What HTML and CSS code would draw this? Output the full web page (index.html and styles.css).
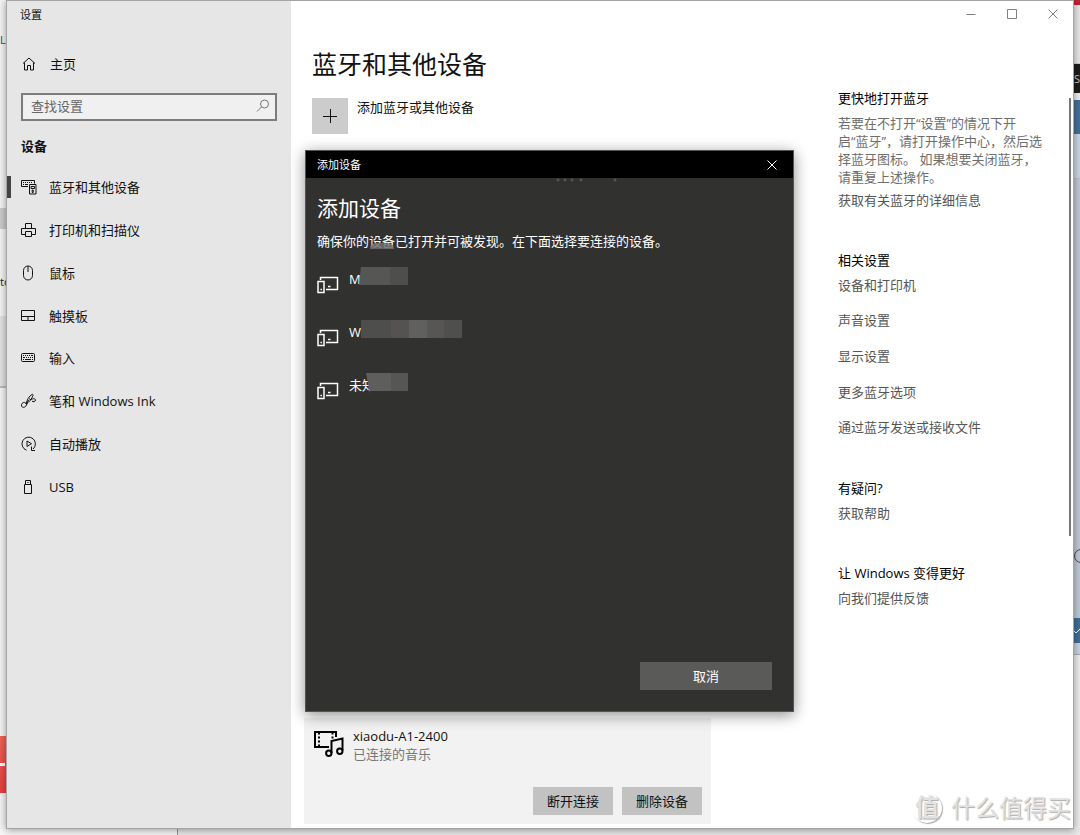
FILE: index.html
```html
<!DOCTYPE html>
<html lang="zh-CN">
<head>
<meta charset="utf-8">
<title>设置</title>
<link rel="stylesheet" href="styles.css">
</head>
<body>
<div class="desktop">
  <div class="edge edge-left" aria-hidden="true">
    <span class="edge-text">La</span>
    <span class="edge-tab"></span>
    <span class="edge-text edge-text-low">to</span>
    <span class="edge-panel"></span>
    <span class="edge-red"><i class="edge-dash"></i></span>
  </div>

  <div class="window">
    <aside class="sidebar">
      <div class="app-title">设置</div>
      <a class="home" href="#">
        <svg class="icon" viewBox="0 0 16 16"><path d="M2 7.500 8 2l6 5.500M3.500 6.500V14H6.500V9.500h3V14h3V6.500"/></svg>
        <span>主页</span>
      </a>
      <label class="search">
        <input type="text" placeholder="查找设置" aria-label="查找设置">
        <svg class="icon icon-search" viewBox="0 0 16 16"><circle cx="9.500" cy="6" r="4"/><path d="M6.500 9 2 13.500"/></svg>
      </label>
      <h2 class="side-heading">设备</h2>
      <nav class="nav">
        <a class="nav-item active" href="#">
          <svg class="icon" viewBox="0 0 16 16"><path d="M7 7.500H.500v-6h13v3M2 3.500h1m1 0h1m1 0h1m1 0h1m1 0h1M2 5.500h1m1 0h3M8.500 5.500h6.500v9.500H8.500zM10 7.500h3.500v2H10zM11.200 11h1v2.500h-1z"/></svg>
          <span>蓝牙和其他设备</span></a>
        <a class="nav-item" href="#">
          <svg class="icon" viewBox="0 0 16 16"><path d="M4.500 6V1.500h6V6M4 12.500H.500v-6h14v6H11M4.500 9.500h6v5h-6z"/></svg>
          <span>打印机和扫描仪</span></a>
        <a class="nav-item" href="#">
          <svg class="icon" viewBox="0 0 16 16"><path d="M2.500 5.500a4.500 4.500 0 0 1 9 0v5a4.500 4.500 0 0 1-9 0zM7 1v6"/></svg>
          <span>鼠标</span></a>
        <a class="nav-item" href="#">
          <svg class="icon" viewBox="0 0 16 16"><path d="M.500 2.500h13v10H.500zM.500 8.500h13M7 8.500v4"/></svg>
          <span>触摸板</span></a>
        <a class="nav-item" href="#">
          <svg class="icon" viewBox="0 0 16 16"><rect x=".5" y="3.500" width="13" height="8" rx="1"/><path d="M2 5.500h1m1 0h1m1 0h1m1 0h1m1 0h2M2 7.500h2m1 0h1m1 0h1m1 0h1m1 0h1M2 9.500h1m1 0h6m1 0h1"/></svg>
          <span>输入</span></a>
        <a class="nav-item" href="#">
          <svg class="icon" viewBox="0 0 16 16"><path d="M5 11c1-4 3-8 6-9.500.700-.500 1.500.300 1 1.200C10.500 6 8.500 9 5 11zM8 5.500l2 1.500M5 11c0-2.500-4-2-4.500.700C0 15 4 15.500 5.500 12c1-2 1-3 2-5M10 7c2-2 4.500-1.500 4.500 0S12 9.500 11 8"/></svg>
          <span>笔和 Windows Ink</span></a>
        <a class="nav-item" href="#">
          <svg class="icon" viewBox="0 0 16 16"><path d="M5.500 14.200A6.700 6.700 0 1 1 12 13M10.500 10.500v4h3.500M6 5l4.500 2.700L6 10.500z"/></svg>
          <span>自动播放</span></a>
        <a class="nav-item" href="#">
          <svg class="icon" viewBox="0 0 16 16"><path d="M4.500 5.500V1.500h5v4M3.500 5.500h7v9h-7zM6 3.500h.700M7.500 3.500h.700"/></svg>
          <span>USB</span></a>
      </nav>
    </aside>

    <div class="main">
      <div class="caption">
        <button class="cap-btn" aria-label="最小化"><svg class="cap-icon" viewBox="0 0 10 10"><path d="M.500 5.500h9"/></svg></button>
        <button class="cap-btn" aria-label="最大化"><svg class="cap-icon" viewBox="0 0 10 10"><path d="M.500.500h9v9h-9z"/></svg></button>
        <button class="cap-btn" aria-label="关闭"><svg class="cap-icon" viewBox="0 0 10 10"><path d="m.500.500 9 9m0-9-9 9"/></svg></button>
      </div>
      <div class="columns">
        <main class="content">
          <h1 class="page-title">蓝牙和其他设备</h1>
          <button class="add">
            <span class="add-tile"><svg class="add-icon" viewBox="0 0 14 14"><path d="M0 7.500h14M7.500 0v14"/></svg></span>
            <span>添加蓝牙或其他设备</span>
          </button>
          <section class="card">
            <div class="card-head">
              <svg class="media-icon" viewBox="0 0 30 28">
                <path d="M22 7V2H1v15h14"/>
                <path d="M5 2.500v14M18.500 2.500v6" stroke-dasharray="2 2"/>
                <path d="M17.500 23V11l11-2.500v12"/>
                <circle cx="14.800" cy="23.300" r="2.700"/><circle cx="25.800" cy="21.300" r="2.700"/>
              </svg>
              <div><div>xiaodu-A1-2400</div><div class="muted">已连接的音乐</div></div>
            </div>
            <div class="card-actions">
              <button class="btn">断开连接</button>
              <button class="btn">删除设备</button>
            </div>
          </section>
        </main>

        <aside class="help">
          <h3>更快地打开蓝牙</h3>
          <p>若要在不打开“设置”的情况下开<br>启“蓝牙”，请打开操作中心，然后选<br>择蓝牙图标。 如果想要关闭蓝牙，<br>请重复上述操作。</p>
          <a class="more" href="#">获取有关蓝牙的详细信息</a>
          <h3>相关设置</h3>
          <div class="links">
            <a href="#">设备和打印机</a>
            <a href="#">声音设置</a>
            <a href="#">显示设置</a>
            <a href="#">更多蓝牙选项</a>
            <a href="#">通过蓝牙发送或接收文件</a>
          </div>
          <h3>有疑问?</h3>
          <a class="single" href="#">获取帮助</a>
          <h3>让 Windows 变得更好</h3>
          <a class="single" href="#">向我们提供反馈</a>
        </aside>
      </div>
    </div>

    <div class="scrollbar"></div>

    <div class="watermark"><span class="mark-badge">值</span><span>什么值得买</span></div>

    <div class="dialog" role="dialog" aria-labelledby="dialog-title">
      <header class="dialog-bar">
        <span>添加设备</span>
        <button class="dialog-close" aria-label="关闭"><svg class="cap-icon" viewBox="0 0 10 10"><path d="m.500.500 9 9m0-9-9 9"/></svg></button>
      </header>
      <div class="dialog-body">
        <svg class="dots" viewBox="0 0 62 4"><circle cx="2" cy="2" r="1.500"/><circle cx="9" cy="2" r="1.500"/><circle cx="16" cy="2" r="1.500"/><circle cx="25" cy="2" r="1.500"/><circle cx="59" cy="2" r="1.500"/></svg>
        <h2 class="dialog-title" id="dialog-title">添加设备</h2>
        <p class="dialog-text">确保你的设备已打开并可被发现。在下面选择要连接的设备。<i class="smudge"></i></p>
        <ul class="devices">
          <li><svg class="device-icon" viewBox="0 0 22 18"><path d="M3.500 4V1.500h17v12H9"/><path d="M1 5.500h6v11H1zM3.500 13.500h1.500M11 10.500h2.500"/></svg>
            <span class="name">M<i class="mask mask-a"></i></span></li>
          <li><svg class="device-icon" viewBox="0 0 22 18"><path d="M3.500 4V1.500h17v12H9"/><path d="M1 5.500h6v11H1zM3.500 13.500h1.500M11 10.500h2.500"/></svg>
            <span class="name">W<i class="mask mask-b"></i></span></li>
          <li><svg class="device-icon" viewBox="0 0 22 18"><path d="M3.500 4V1.500h17v12H9"/><path d="M1 5.500h6v11H1zM3.500 13.500h1.500M11 10.500h2.500"/></svg>
            <span class="name">未知<i class="mask mask-c"></i></span></li>
        </ul>
        <button class="cancel">取消</button>
      </div>
    </div>
  </div>

  <div class="edge edge-right" aria-hidden="true">
    <span class="er-red"></span>
    <span class="er-light"></span>
    <span class="er-black">SM</span>
    <span class="er-blue"></span>
    <span class="er-pale"></span>
    <span class="er-lower"><svg class="er-clock" viewBox="0 0 14 14"><circle cx="7" cy="7" r="6.500"/><path d="M7 4v4"/></svg></span>
    <span class="er-check"><svg class="er-tick" viewBox="0 0 6 6"><path d="m0 3 2 2 4-4"/></svg></span>
    <span class="er-end"></span>
  </div>
  <div class="edge-bottom" aria-hidden="true"></div>
</div>
</body>
</html>
```
FILE: styles.css
```css
* { box-sizing: border-box; }
body {
  margin: 0;
  font: 13px/18px "Open Sans", "Noto Sans CJK SC", sans-serif;
  color: #111;
}
h1, h2, h3, p, ul { margin: 0; padding: 0; font-weight: 400; }
a { color: inherit; text-decoration: none; }
button { font: inherit; color: inherit; border: 0; padding: 0; background: none; }
svg { display: block; flex: none; fill: none; stroke: currentColor; }

.desktop {
  display: grid;
  grid-template-columns: 6px minmax(0, 1fr) 6px;
  grid-template-rows: minmax(0, 1fr) 6px;
  min-height: 100vh;
  overflow: hidden;
  background: #f3f3f3;
}

/* Window */
.window {
  position: relative;
  z-index: 1;
  display: flex;
  background: #fff;
  border: 1px solid #a5a5a5;
  box-shadow: 0 1px 8px rgba(0, 0, 0, .4);
}
.sidebar { width: 284px; flex: none; background: #e6e6e6; }
.app-title { padding: 5px 13px 4px; font-size: 11px; }
.icon { width: 16px; height: 16px; }
.home { display: flex; align-items: center; gap: 13px; margin-top: 17px; padding: 10px 14px; }
.search {
  display: flex;
  align-items: center;
  height: 28px;
  margin: 10px 14px 0;
  padding: 0 4px 2px 8px;
  border: 2px solid #7c7c7c;
  background: #f0f0f0;
}
.search input {
  flex: 1;
  min-width: 0;
  padding: 0;
  border: 0;
  outline: 0;
  background: none;
  font: inherit;
}
.search input::placeholder { color: #666; opacity: 1; }
.icon-search { color: #777; }
.side-heading { margin: 16px 14px 0; font-size: 13px; font-weight: 700; }
.nav { display: grid; grid-auto-rows: 1fr; height: 342px; margin-top: 11px; }
.nav-item { display: flex; align-items: center; gap: 12px; padding-left: 14px; }
.nav-item.active { background: linear-gradient(#444, #444) left center / 4px 22px no-repeat; }

.main { flex: 1; min-width: 0; display: flex; flex-direction: column; }
.caption { display: flex; justify-content: flex-end; color: #808080; }
.cap-btn { display: flex; justify-content: center; align-items: center; width: 41px; height: 26px; }
.cap-icon { width: 10px; height: 10px; }
.columns { flex: 1; display: flex; justify-content: space-between; }
.content { flex: 0 1 420px; display: flex; flex-direction: column; padding: 19px 0 4px 13px; }
.page-title { padding-left: 8px; font-size: 25px; line-height: 36px; }
.add { display: flex; gap: 9px; margin: 16px 0 0 8px; align-items: flex-start; text-align: left; }
.add-tile { display: flex; align-items: center; justify-content: center; width: 36px; height: 36px; background: #ccc; }
.add-icon { width: 14px; height: 14px; }
.card { margin-top: auto; padding: 9px; background: #f2f2f2; }
.card-head { display: flex; gap: 9px; padding-left: 1px; }
.media-icon { width: 30px; height: 28px; margin-top: 3px; color: #000; stroke-width: 2; }
.muted { color: #767676; }
.card-actions { display: flex; justify-content: flex-end; gap: 9px; margin-top: 24px; }
.btn { width: 80px; height: 28px; background: #c2c2c2; }

.help { flex: none; width: 235px; padding-top: 62px; white-space: nowrap; color: #555; }
.help h3 { font-size: 13px; color: #000; }
.help p { margin: 7px 0 5px; color: #6e6e6e; }
.help a { display: block; }
.more { margin-bottom: 42px; }
.links { display: grid; grid-auto-rows: 1fr; align-items: center; height: 178px; margin: -2px 0 34px; }
.links a { color: #555; }
.help .single { margin: 7px 0 42px; }
.scrollbar { position: absolute; right: 2px; top: 97px; width: 2px; height: 438px; background: #777; }

.watermark {
  position: absolute;
  right: 2px;
  bottom: 3px;
  display: flex;
  align-items: center;
  gap: 9px;
  font-size: 24px;
  line-height: 34px;
  color: #e2e2e2;
  text-shadow: 1px 1px 1px #aaa;
}
.mark-badge {
  width: 30px;
  height: 30px;
  border-radius: 50%;
  box-shadow: 1px 1px 1px #aaa;
  font-weight: 700;
  line-height: 28px;
  text-align: center;
}

/* Add-device dialog */
.dialog {
  position: absolute;
  left: 298px;
  top: 149px;
  width: 489px;
  height: 562px;
  display: flex;
  flex-direction: column;
  border: 1px solid #555;
  background: #31312f;
  color: #fff;
  box-shadow: 0 3px 14px rgba(0, 0, 0, .45);
}
.dialog-bar {
  display: flex;
  align-items: center;
  justify-content: space-between;
  height: 27px;
  padding-left: 11px;
  background: #000;
  font-size: 11px;
}
.dialog-close { display: flex; align-items: center; justify-content: center; width: 42px; height: 27px; }
.dialog-body { position: relative; flex: 1; display: flex; flex-direction: column; padding: 14px 21px 21px 11px; }
.dots { position: absolute; left: 250px; top: 0; width: 62px; height: 4px; fill: #555; stroke: none; }
.dialog-title { font-size: 21px; line-height: 32px; }
.dialog-text { position: relative; margin-top: 8px; white-space: nowrap; }
.smudge { position: absolute; left: 53px; top: 11px; width: 24px; height: 6px; border-radius: 12px 12px 0 0; background: rgba(110, 110, 110, .85); }
.devices { list-style: none; margin-top: 20px; }
.devices li { display: flex; gap: 10px; height: 53px; }
.device-icon { width: 22px; height: 18px; margin-top: 6px; stroke-width: 1.5; }
.name { position: relative; align-self: flex-start; }
.mask { position: absolute; height: 18px; top: -3px; }
.mask-a { left: 10px; width: 49px; background: linear-gradient(90deg, #565654 31px, #4e4e4c 31px); clip-path: polygon(4% 0, 100% 0, 100% 100%, 0 100%); }
.mask-b { left: 12px; width: 101px; background: linear-gradient(90deg, #4e4e4c 30px, #555351 30px 48px, #60605e 48px 66px, #585654 66px 83px, #4f4f4d 83px); }
.mask-c {
  left: 17px;
  width: 42px;
  height: 22px;
  background: linear-gradient(#31312f, #31312f) bottom / 100% 4px no-repeat, linear-gradient(90deg, #5e5e5c 25px, #565654 25px);
  clip-path: polygon(0 0, 100% 0, 100% 100%, 10% 100%);
}
.cancel { align-self: flex-end; width: 132px; height: 28px; margin-top: auto; background: #5a5a58; }

/* Slivers of the desktop behind the window */
.edge { display: flex; flex-direction: column; overflow: hidden; background: #f5f5f5; }
.edge-text { margin-top: 31px; height: 18px; font-size: 11px; color: #1b4a70; }
.edge-tab { height: 21px; margin-top: 159px; background: #ccc; }
.edge-text-low { margin-top: 44px; color: #123; }
.edge-panel { height: 72px; margin-top: 25px; background: #e3e3e3; border-bottom: 2px solid #bbb; }
.edge-red { display: flex; align-items: center; height: 57px; margin-top: 348px; background: linear-gradient(#ee6456, #e6403f); }
.edge-dash { width: 5px; height: 3px; background: #fff; }
.edge-right { background: #eee; }
.er-red { height: 5px; background: #c81f2d; }
.er-light { height: 59px; background: #e8e8e8; border-bottom: 1px solid #ccc; }
.er-black { height: 29px; font-size: 11px; line-height: 29px; background: #1c1c1c; color: #ccc; }
.er-blue { height: 34px; margin-top: 7px; background: #44719b; }
.er-pale { height: 45px; background: #c9d8e6; border-bottom: 1px solid #b0bfcc; }
.er-lower { height: 439px; padding-top: 370px; background: #becbd6; }
.er-clock { width: 14px; height: 14px; color: #445; }
.er-check { display: flex; align-items: center; height: 25px; background: #3f6f9b; color: #fff; }
.er-tick { width: 6px; height: 6px; }
.er-end { height: 12px; background: #c9d4df; border-bottom: 1px solid #aaa; }
.edge-bottom { grid-column: 1 / -1; background: linear-gradient(90deg, #f7f7f7 177px, #999 177px 178px, #e9e9e9 178px); }
```
